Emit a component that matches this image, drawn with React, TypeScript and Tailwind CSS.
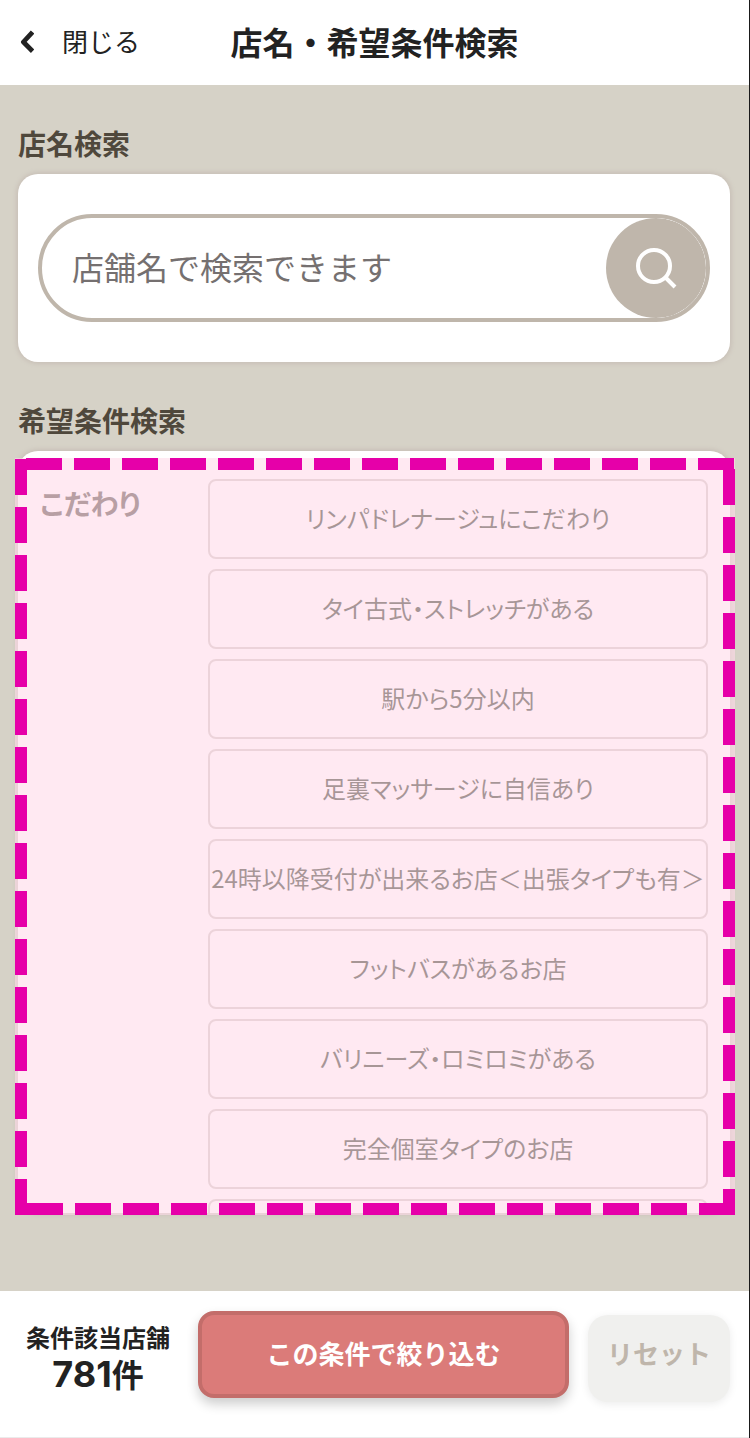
import { useState } from 'react'

const OPTIONS = [
  'リンパドレナージュにこだわり',
  'タイ古式・ストレッチがある',
  '駅から5分以内',
  '足裏マッサージに自信あり',
  '24時以降受付が出来るお店＜出張タイプも有＞',
  'フットバスがあるお店',
  'バリニーズ・ロミロミがある',
  '完全個室タイプのお店',
]

function Header() {
  return (
    <header className="grid h-[85px] shrink-0 grid-cols-[1fr_auto_1fr] items-center bg-white pb-[3px]">
      <button type="button" className="flex items-center gap-7 justify-self-start pl-5 text-[26px] leading-10">
        <svg width="14" height="24" viewBox="0 0 14 24" fill="none" aria-hidden="true">
          <path d="M12.600 3L3.400 13l9.200 9.200" stroke="#222" strokeWidth="4.800" strokeLinejoin="round" />
        </svg>
        閉じる
      </button>
      <h1 className="text-[32px] leading-10 font-bold">店名・希望条件検索</h1>
      <span />
    </header>
  )
}

function SearchCard() {
  return (
    <section>
      <h2 className="pb-[11px] text-[28px] leading-10 font-bold text-[#4f483c]">
        <label htmlFor="shop-name">店名検索</label>
      </h2>
      <div className="rounded-[20px] bg-white px-5 py-10 shadow-[0_0_4px_2px_#c9c1b8]">
        <form
          className="flex h-[108px] overflow-hidden rounded-full border-4 border-[#bfb6ab]"
          onSubmit={(e) => e.preventDefault()}
        >
          <input
            id="shop-name"
            type="text"
            placeholder="店舗名で検索できます"
            className="min-w-0 flex-1 pb-1 pl-[30px] text-[32px] outline-none placeholder:text-[#757070]"
          />
          <button
            type="submit"
            aria-label="検索"
            className="flex size-[100px] shrink-0 items-center justify-center rounded-full bg-[#bfb6ab]"
          >
            <svg width="42" height="42" viewBox="0 0 42 42" fill="none" stroke="#fff" strokeWidth="4" aria-hidden="true">
              <circle cx="19" cy="19" r="16" />
              <path d="M30 30l10 10" />
            </svg>
          </button>
        </form>
      </div>
    </section>
  )
}

// dashed frame with a translucent pink fill, laid over the condition card
function Highlight() {
  return (
    <div className="pointer-events-none absolute top-[7px] -right-[5px] -bottom-[2px] -left-[3px] bg-[#ffdaea]/60">
      <span className="absolute top-0 right-px left-[11px] h-3 bg-[repeating-linear-gradient(to_right,#e600a9_0_36px,transparent_36px_48px)]" />
      <span className="absolute right-0 bottom-0 left-3 h-3 bg-[repeating-linear-gradient(to_right,#e600a9_0_36px,transparent_36px_48px)]" />
      <span className="absolute top-px bottom-0 left-0 w-3 bg-[repeating-linear-gradient(to_bottom,#e600a9_0_36px,transparent_36px_48px)]" />
      <span className="absolute top-[11px] right-0 bottom-0 w-3 bg-[repeating-linear-gradient(to_bottom,#e600a9_0_36px,transparent_36px_48px)]" />
    </div>
  )
}

interface ConditionCardProps {
  selected: string[];
  onToggle: (name: string) => void;
}

function ConditionCard({ selected, onToggle }: ConditionCardProps) {
  return (
    <section className="mt-[38px] flex min-h-0 flex-1 flex-col">
      <h2 className="pb-[11px] text-[28px] leading-10 font-bold text-[#4f483c]">希望条件検索</h2>
      <div className="relative flex min-h-0 flex-1 flex-col">
        <div className="flex min-h-0 flex-1 items-start overflow-y-auto rounded-[20px] bg-white px-[22px] pt-7 shadow-[0_0_4px_2px_#c9c1b8] [scrollbar-width:none] [font-feature-settings:'palt']">
          <h3 className="w-[168px] shrink-0 text-[28px] leading-[48px] font-bold text-[#4f483c]">こだわり</h3>
          <div className="flex min-w-0 flex-1 flex-col gap-[10px]">
            {OPTIONS.map((name) => (
              <button
                key={name}
                type="button"
                aria-pressed={selected.includes(name)}
                onClick={() => onToggle(name)}
                className="h-20 shrink-0 rounded-lg border-2 border-[#cfc9c2] pb-[3px] text-2xl whitespace-nowrap text-[#24301a] aria-pressed:bg-[#f4f1ea]"
              >
                {name}
              </button>
            ))}
            <div className="h-20 shrink-0 rounded-lg border-2 border-[#cfc9c2]" />
          </div>
        </div>
        <Highlight />
      </div>
    </section>
  )
}

function Footer({ onReset }: { onReset: () => void }) {
  return (
    <footer className="flex h-[147px] shrink-0 items-start border-b border-[#ebebeb] bg-white pt-5 pr-[19px] pl-[26px]">
      <p className="mt-2 flex w-36 shrink-0 flex-col items-center font-bold">
        <span className="text-2xl leading-9">条件該当店舗</span>
        <span className="text-[32px] leading-9">
          <span className="font-['Inter',sans-serif] text-4xl leading-9">781</span>件
        </span>
      </p>
      <button
        type="button"
        className="ml-7 h-[87px] flex-1 rounded-2xl border-4 border-[#c36d6a] bg-[#db7b79] pb-1 text-[26px] font-bold text-white shadow-[0_6px_12px_rgba(0,0,0,0.2)]"
      >
        この条件で絞り込む
      </button>
      <button
        type="button"
        onClick={onReset}
        className="mt-1 ml-[19px] h-[87px] w-[142px] shrink-0 rounded-[20px] bg-[#f0f0ee] pb-3 text-[26px] font-bold text-[#bfb6ab] shadow-[0_2px_8px_rgba(0,0,0,0.08)]"
      >
        リセット
      </button>
    </footer>
  )
}

export default function App() {
  const [selected, setSelected] = useState<string[]>([])

  const toggle = (name: string) => {
    setSelected((prev) => (prev.includes(name) ? prev.filter((n) => n !== name) : [...prev, name]))
  }

  return (
    <div
      lang="ja"
      className="flex h-screen flex-col border-r border-[#1a1a1a] bg-[#d6d2c7] font-['Noto_Sans_CJK_JP',sans-serif] text-[#222]"
    >
      <Header />
      <main className="flex min-h-0 flex-1 flex-col pt-[38px] pr-[19px] pb-[78px] pl-[18px]">
        <SearchCard />
        <ConditionCard selected={selected} onToggle={toggle} />
      </main>
      <Footer onReset={() => setSelected([])} />
    </div>
  )
}
